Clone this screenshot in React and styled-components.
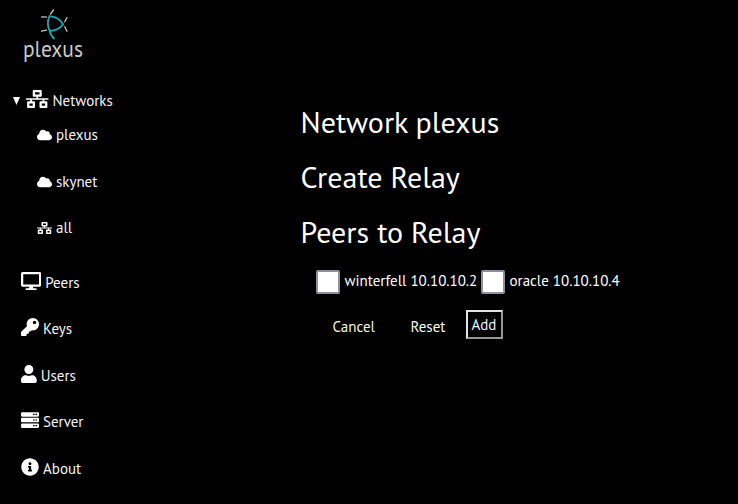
import React from "react";
import styled, { createGlobalStyle } from "styled-components";
import {
  FaCloud,
  FaDesktop,
  FaInfoCircle,
  FaKey,
  FaNetworkWired,
  FaServer,
  FaUser,
} from "react-icons/fa";

const GlobalStyle = createGlobalStyle`
  * { box-sizing: border-box; }
  body {
    margin: 0;
    background: #000;
    color: #fff;
    font-family: "PT Sans", "Noto Sans", sans-serif;
    font-size: 15px;
    line-height: 20px;
  }
`;

const Page = styled.div`
  display: grid;
  grid-template-columns: 300.5px 1fr;
  width: 738px;
  height: 504px;
  overflow: hidden;
  background: #000;
`;

const Sidebar = styled.aside`
  padding-top: 6px;
`;

const Logo = styled.svg`
  display: block;
  width: 70px;
  height: 60px;
  margin: 0 0 24px 20px;
`;

const Nav = styled.nav`
  display: flex;
  flex-direction: column;
`;

const NavItem = styled.a`
  display: flex;
  align-items: flex-start;
  height: 20px;
  margin-top: ${(p) => p.$gap}px;
  padding-left: ${(p) => p.$indent}px;
  color: #f6f6f6;
`;

const Marker = styled.svg`
  width: 7px;
  height: 8px;
  margin: 7px 6px 0 0;
`;

const Icon = styled.span`
  display: flex;
  flex: none;
  width: ${(p) => p.$width}px;
  margin: ${(p) => (p.$small ? "5px 4px 0 0" : "0 4px 0 0")};
  color: #fff;

  svg {
    width: 100%;
    height: ${(p) => (p.$small ? 12 : 18)}px;
  }
`;

const Label = styled.span`
  display: block;
  flex: none;
  margin-top: 1px;
  white-space: nowrap;
`;

const Content = styled.main`
  padding-top: 102px;
`;

const Heading = styled.h1`
  height: 40px;
  margin: 0 0 15px;
  font-size: 30px;
  font-weight: 400;
  line-height: 40px;
  white-space: nowrap;
`;

const Peers = styled.div`
  display: flex;
  height: 24px;
  margin: 18px 0 0 15.5px;
`;

const Peer = styled.label`
  display: flex;
  width: 165px;
  gap: 4.5px;
`;

const Checkbox = styled.input`
  appearance: none;
  flex: none;
  width: 24px;
  height: 24px;
  margin: 0;
  border: 2px solid #8f8f9d;
  border-radius: 2px;
  background: #fff;
`;

const Actions = styled.div`
  display: flex;
  align-items: flex-start;
  margin: 16px 0 0 15.5px;
`;

const Button = styled.button`
  width: ${(p) => p.$width}px;
  height: 29px;
  padding: ${(p) => p.$pad};
  border: ${(p) => (p.$framed ? "2px solid" : "0")};
  border-color: #e3e3e3 #979797 #979797 #e3e3e3;
  background: #000;
  color: ${(p) => p.$color};
  font: inherit;
  text-align: left;
`;

const items = [
  { label: "Networks", icon: FaNetworkWired, iconWidth: 22.5, open: true, indent: 13, gap: 0 },
  { label: "plexus", icon: FaCloud, iconWidth: 15, small: true, indent: 37, gap: 14 },
  { label: "skynet", icon: FaCloud, iconWidth: 15, small: true, indent: 37, gap: 27 },
  { label: "all", icon: FaNetworkWired, iconWidth: 15, small: true, indent: 37, gap: 26 },
  { label: "Peers", icon: FaDesktop, iconWidth: 20.25, indent: 21, gap: 35 },
  { label: "Keys", icon: FaKey, iconWidth: 18, indent: 21, gap: 26 },
  { label: "Users", icon: FaUser, iconWidth: 15.75, indent: 21, gap: 27 },
  { label: "Server", icon: FaServer, iconWidth: 18, indent: 21, gap: 26 },
  { label: "About", icon: FaInfoCircle, iconWidth: 18, indent: 21, gap: 27 },
];

function PlexusLogo() {
  return (
    <Logo viewBox="0 0 70 60" aria-label="plexus">
      <g fill="none" strokeLinecap="round">
        <path
          stroke="#18a8b8"
          strokeWidth="1.8"
          d="M29.5 10.2C35 10.5 40 13.5 43.2 18.2C40 22.5 35.5 24.5 29.7 25M29.5 10.2C27.3 15 27.3 20 29.7 25C30.5 28 31.5 30.5 34 32.5"
        />
        <path
          stroke="#c6c6c6"
          strokeWidth="1.3"
          d="M30.5 8L33.5 4M26.5 11.2L21.5 10.8M26.5 24.2L21.5 25.2M44.8 15.8L47 11.5M44.8 20.8L47 25.2"
        />
      </g>
      <text
        x="3"
        y="50.7"
        fill="#cbcbcb"
        fontFamily="PT Sans, Noto Sans, sans-serif"
        fontSize="23"
        textLength="60"
        lengthAdjust="spacingAndGlyphs"
      >
        plexus
      </text>
    </Logo>
  );
}

export default function App() {
  return (
    <Page>
      <GlobalStyle />
      <Sidebar>
        <PlexusLogo />
        <Nav>
          {items.map(({ label, icon: Glyph, iconWidth, small, open, indent, gap }) => (
            <NavItem key={label} $indent={indent} $gap={gap}>
              {open && (
                <Marker viewBox="0 0 7 8">
                  <path d="M0 0h7L3.5 8z" fill="#fff" />
                </Marker>
              )}
              <Icon $width={iconWidth} $small={small}>
                <Glyph />
              </Icon>
              <Label>{label}</Label>
            </NavItem>
          ))}
        </Nav>
      </Sidebar>
      <Content>
        <Heading>Network plexus</Heading>
        <Heading>Create Relay</Heading>
        <Heading>Peers to Relay</Heading>
        <Peers>
          <Peer>
            <Checkbox type="checkbox" />
            <Label>winterfell 10.10.10.2</Label>
          </Peer>
          <Peer>
            <Checkbox type="checkbox" />
            <Label>oracle 10.10.10.4</Label>
          </Peer>
        </Peers>
        <Actions>
          <Button $width={79} $pad="6px 0 2px 16.5px" $color="#f5f5dc">
            <Label>Cancel</Label>
          </Button>
          <Button $width={71} $pad="6px 0 2px 15.5px" $color="#f5fff5">
            <Label>Reset</Label>
          </Button>
          <Button $width={37} $pad="2px 0 2px 3.5px" $color="#e6f4ff" $framed>
            <Label>Add</Label>
          </Button>
        </Actions>
      </Content>
    </Page>
  );
}
